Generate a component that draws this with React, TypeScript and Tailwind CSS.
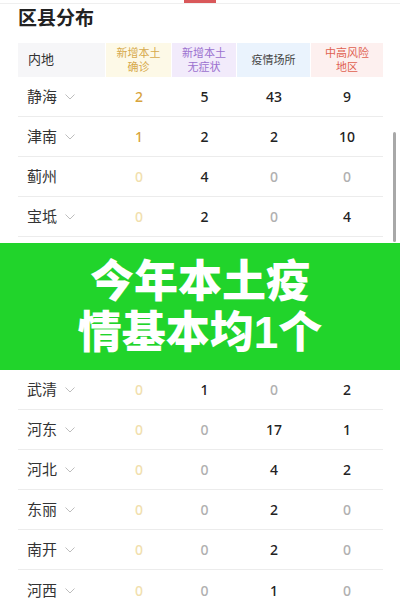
type Row = { name: string; arrow: boolean; vals: number[] };

const topRows: Row[] = [
  { name: "静海", arrow: true, vals: [2, 5, 43, 9] },
  { name: "津南", arrow: true, vals: [1, 2, 2, 10] },
  { name: "蓟州", arrow: false, vals: [0, 4, 0, 0] },
  { name: "宝坻", arrow: true, vals: [0, 2, 0, 4] },
];

const bottomRows: Row[] = [
  { name: "武清", arrow: true, vals: [0, 1, 0, 2] },
  { name: "河东", arrow: true, vals: [0, 0, 17, 1] },
  { name: "河北", arrow: true, vals: [0, 0, 4, 2] },
  { name: "东丽", arrow: true, vals: [0, 0, 2, 0] },
  { name: "南开", arrow: true, vals: [0, 0, 2, 0] },
  { name: "河西", arrow: true, vals: [0, 0, 1, 0] },
];

const widths = ["w-[88px]", "w-[66px]", "w-[65px]", "w-[74px]", "w-[72px]"];

// thin chevron, wider than lucide's
const Chevron = () => (
  <svg width="10" height="6" viewBox="0 0 10 6" className="ml-[8px] mt-[1px]">
    <polyline points="0.5,0.5 5,5 9.5,0.5" fill="none" stroke="#bdbdbd" strokeWidth="1" />
  </svg>
);

const DataRow = ({ row, last }: { row: Row; last?: boolean }) => (
  <div
    className={
      "flex h-[40px] items-center " + (last ? "" : "border-b border-[#ececec]")
    }
  >
    <div className="w-[88px] flex items-center pl-[9px] text-[15px] text-[#333]">
      <span>{row.name}</span>
      {row.arrow && <Chevron />}
    </div>
    {row.vals.map((v, i) => {
      let color = "text-[#222]";
      if (i === 0) color = v === 0 ? "text-[#f1dfae]" : "text-[#d8a43c]";
      else if (v === 0) color = "text-[#b0b0b0]";
      return (
        <div
          key={i}
          className={widths[i + 1] + " text-center text-[14px] font-medium " + color}
        >
          {v}
        </div>
      );
    })}
  </div>
);

const App = () => {
  return (
    <div
      className="relative w-[400px] h-[611px] overflow-hidden bg-white"
      style={{ fontFamily: '"Noto Sans", "Noto Sans CJK SC", sans-serif' }}
    >
      <div className="relative h-[4px] border-b border-[#efefef]">
        <div className="absolute left-[184px] top-0 h-[3px] w-[32px] bg-[#d9585a]" />
      </div>

      <h1 className="mt-[1px] ml-[18px] text-[19px] leading-[26px] font-bold text-[#222]">
        区县分布
      </h1>

      <div className="mx-[18px] mt-[12px] w-[365px]">
        <div className="flex h-[34px] text-center">
          <div className="w-[87px] mr-[1px] flex items-center pl-[10px] bg-[#f6f6f8] text-[13px] text-[#333]">
            内地
          </div>
          <div className="w-[65px] mr-[1px] flex flex-col justify-center bg-[#fdf9e7] text-[11px] leading-[14px] text-[#d7a94c]">
            <span>新增本土</span>
            <span>确诊</span>
          </div>
          <div className="w-[64px] mr-[1px] flex flex-col justify-center bg-[#f2ebfb] text-[11px] leading-[14px] text-[#9b70cf]">
            <span>新增本土</span>
            <span>无症状</span>
          </div>
          <div className="w-[73px] mr-[1px] flex items-center justify-center bg-[#eaf3fd] text-[11px] text-[#444]">
            疫情场所
          </div>
          <div className="w-[72px] flex flex-col justify-center bg-[#fdf0ef] text-[11px] leading-[14px] text-[#e0604f]">
            <span>中高风险</span>
            <span>地区</span>
          </div>
        </div>
        {topRows.map((r) => (
          <DataRow key={r.name} row={r} />
        ))}
      </div>

      <div
        className="mt-[6px] h-[127px] bg-[#21d42b] flex flex-col items-center justify-center text-white text-[44px] leading-[51px] font-black"
        style={{ fontFamily: '"Liberation Sans", "Noto Sans CJK SC", sans-serif' }}
      >
        <span>今年本土疫</span>
        <span>情基本均1个</span>
      </div>

      <div className="mx-[18px] w-[365px]">
        {bottomRows.map((r, i) => (
          <DataRow key={r.name} row={r} last={i === bottomRows.length - 1} />
        ))}
      </div>

      <div className="absolute left-[393px] top-[132px] h-[110px] w-[3px] rounded-full bg-[#a8a8a8]" />
    </div>
  );
};

export default App;
